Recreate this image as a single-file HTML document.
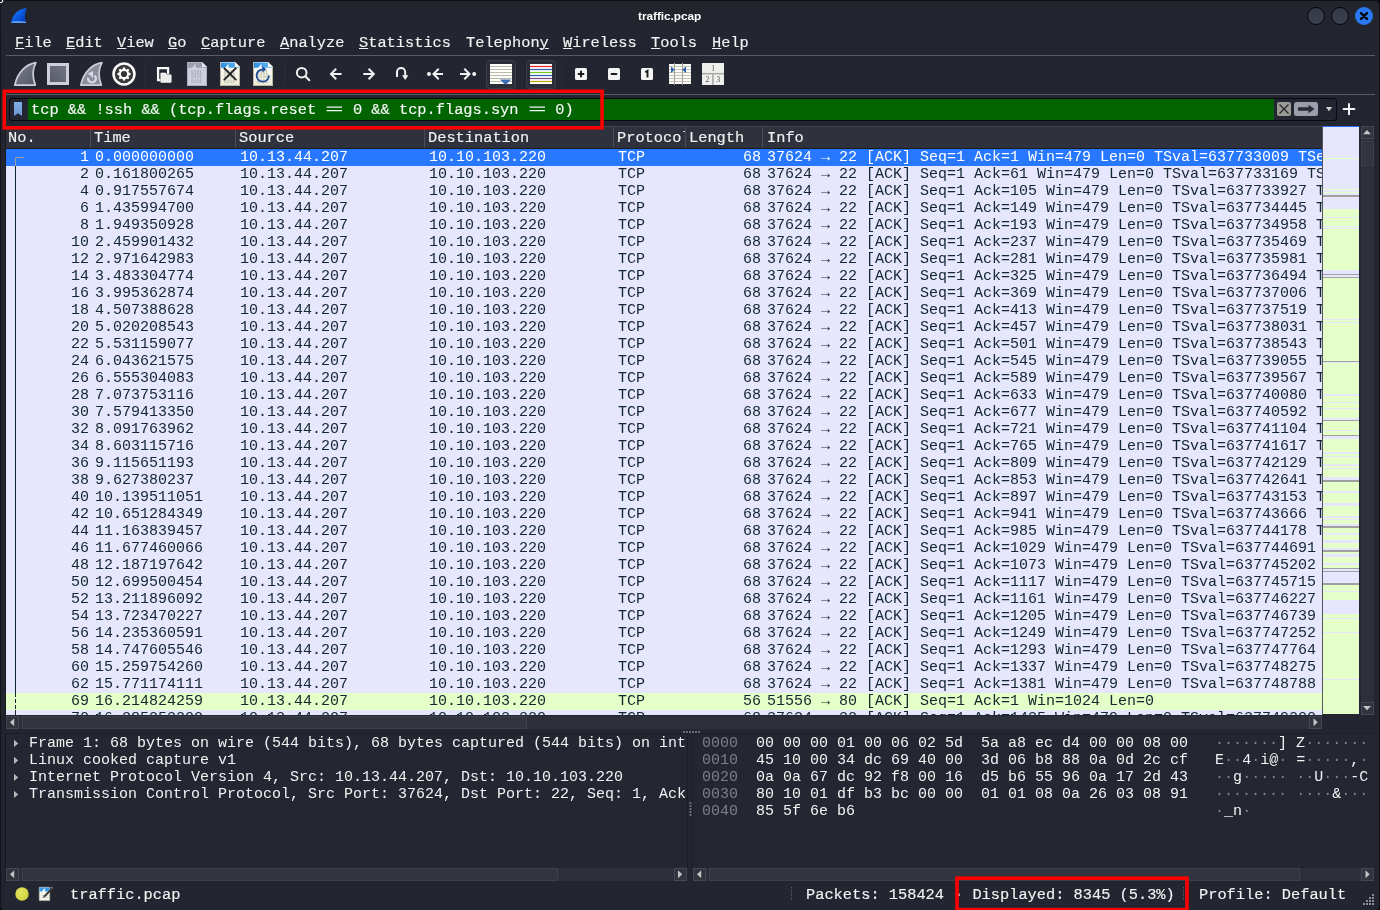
<!DOCTYPE html>
<html><head><meta charset="utf-8"><title>traffic.pcap</title>
<style>
*{box-sizing:border-box;margin:0;padding:0}
html,body{width:1380px;height:910px;overflow:hidden;background:#0e0f13}
body{position:relative;font-family:"Liberation Mono",monospace;font-size:15px;color:#f0f0f0}
.abs{position:absolute}
body>*{will-change:transform}
.ui{font-size:15.33px;-webkit-text-stroke:.15px currentColor}
#frame{left:0;top:0;width:1380px;height:911px;background:#22252d;border-left:1px solid #121419;border-top:1px solid #0e0f13;border-right:1px solid #101116;border-radius:0 5px 5px 5px}
#below{display:none}
#inner{left:5px;top:31px;width:1370px;height:879px;background:#232631}
#title{left:638px;top:7px;height:18px;line-height:18px;font-family:"Liberation Sans",sans-serif;font-weight:bold;font-size:11.800px;letter-spacing:-.03px;color:#fff;white-space:pre}
.mi{position:absolute;top:34px;height:18px;line-height:18px;color:#f2f2f2;white-space:pre}
.mi u{text-decoration:underline;text-underline-offset:1px;text-decoration-thickness:1px}
.hl{position:absolute;left:6px;width:1369px;height:1px;background:#595c65}
/* filter */
#filter{left:9px;top:98px;width:1328px;height:23px;border:1px solid #08090b;border-radius:3px;background:#232631;overflow:hidden}
#fgreen{left:18px;top:0;width:1246px;height:21px;background:#006400}
.eq{display:inline-block;vertical-align:.4px}
#ftext{left:21px;top:1px;height:21px;line-height:21px;color:#f8f8f8;white-space:pre}
/* list */
#lhead{left:6px;top:126px;width:1316px;height:22px;background:#2f323c;border-top:1px solid #41444e}
#lheadb{left:6px;top:148px;width:1316px;height:1px;background:#1a1a1c}
.hc{position:absolute;top:130px;height:17px;line-height:17px;color:#f2f2f2;white-space:pre}
.hs{position:absolute;top:126px;width:1px;height:22px;background:#4a4d57}
#list{left:6px;top:149px;width:1316px;height:566px;background:#e7e6ff;overflow:hidden}
.r{position:absolute;left:0;width:1316px;height:17px;line-height:17px;color:#12272e;white-space:pre}
.r.sel{background:#2778ff;color:#fff}
.r.grn{background:#e4ffc7}
.c{position:absolute;top:0;height:17px;overflow:hidden}
.no{left:0;width:83px;text-align:right}
.tm{left:89px;width:140px}
.sr{left:234px;width:180px}
.ds{left:423px;width:180px}
.pr{left:612px;width:70px}
.ln{left:680px;width:75px;text-align:right}
.inf{left:761px;width:555px}
/* scrollbars */
.sb{position:absolute;background:#2d303a}
.sbtn{position:absolute;background:#31343e;border:1px solid #454852}
.shandle{position:absolute;background:#323540;border:1px solid #3d404a}
/* panes */
#detail{left:6px;top:733px;width:682px;height:135px;background:#242731;border-top:1px solid #1d1f27;border-right:1px solid #1b1d25}
#bytes{left:692px;top:733px;width:682px;height:135px;background:#242731;border-top:1px solid #1d1f27;border-left:1px solid #1b1d25}
.dl{position:absolute;left:23px;height:17px;line-height:17px;white-space:pre;color:#f2f2f2;width:658px;overflow:hidden}
.bl{position:absolute;left:9px;height:17px;line-height:17px;white-space:pre;color:#f2f2f2}
.bl i{font-style:normal;color:#7d7f88}
.bl b{font-weight:normal;color:#80828b}
.st{position:absolute;top:886px;height:18px;line-height:18px;white-space:pre;color:#f2f2f2}
</style></head><body>
<div id="frame" class="abs"></div>
<div id="below" class="abs"></div>
<div id="inner" class="abs"></div>
<div id="title" class="abs">traffic.pcap</div>
<svg class="abs" style="left:0;top:0" width="1380" height="31" viewBox="0 0 1380 31">
<defs><linearGradient id="gwf" x1="0" y1="0" x2="1" y2="1"><stop offset="0" stop-color="#2a86ff"/><stop offset=".5" stop-color="#0a5ae0"/><stop offset="1" stop-color="#0230a8"/></linearGradient>
<linearGradient id="gbtn" x1="0" y1="0" x2="0" y2="1"><stop offset="0" stop-color="#363946"/><stop offset="1" stop-color="#3c3f4c"/></linearGradient></defs>
<rect x="0" y="0" width="5" height="5" fill="#22252d"/><rect x="0" y="0" width="2" height="2" fill="#14161c"/><path d="M2.500 0v1.300q0 1.200-1.200 1.200h-1.300" stroke="#f6f6f6" stroke-width="1.100" fill="none"/><circle cx="2.900" cy="2.900" r=".5" fill="#0a0b0e"/><circle cx="1.500" cy="3.800" r=".5" fill="#0a0b0e"/>
<path d="M26.8 8.100C18.3 8.800 12.500 14 11.100 23.100h15.100C24.600 18.500 24.400 13 26.800 8.300Z" fill="url(#gwf)"/>
<path d="M11.300 23h15l-.4-1.300q-7-1-14.100-.3z" fill="#5e9df5"/>
<circle cx="1316" cy="16" r="8.500" fill="url(#gbtn)" stroke="#050608" stroke-width="1"/>
<circle cx="1340" cy="16" r="8.500" fill="url(#gbtn)" stroke="#050608" stroke-width="1"/>
<circle cx="1364" cy="16" r="9" fill="#2a77f2"/>
<path d="M1361 13.100l6 5.800M1367 13.100l-6 5.800" stroke="#050505" stroke-width="2.300" stroke-linecap="round"/>
</svg>

<span class="mi ui" style="left:15px"><u>F</u>ile</span>
<span class="mi ui" style="left:66px"><u>E</u>dit</span>
<span class="mi ui" style="left:117px"><u>V</u>iew</span>
<span class="mi ui" style="left:168px"><u>G</u>o</span>
<span class="mi ui" style="left:201px"><u>C</u>apture</span>
<span class="mi ui" style="left:280px"><u>A</u>nalyze</span>
<span class="mi ui" style="left:359px"><u>S</u>tatistics</span>
<span class="mi ui" style="left:466px">Telephon<u>y</u></span>
<span class="mi ui" style="left:563px"><u>W</u>ireless</span>
<span class="mi ui" style="left:651px"><u>T</u>ools</span>
<span class="mi ui" style="left:712px"><u>H</u>elp</span>
<div class="hl" style="top:55px"></div>
<svg class="abs" style="left:0;top:56px" width="1380" height="38" viewBox="0 56 1380 38">
<defs>
<linearGradient id="gfin" x1="0" y1="0" x2="1" y2="1"><stop offset="0" stop-color="#7a7d8a"/><stop offset="1" stop-color="#555865"/></linearGradient>
<linearGradient id="gsq" x1="1" y1="0" x2="0" y2="1"><stop offset="0" stop-color="#757885"/><stop offset="1" stop-color="#555865"/></linearGradient>
<linearGradient id="gblue" x1="0" y1="0" x2="1" y2="0"><stop offset="0" stop-color="#2a8fe0"/><stop offset="1" stop-color="#63b8f2"/></linearGradient>
<linearGradient id="gdoc" x1="0" y1="0" x2="0" y2="1"><stop offset="0" stop-color="#ffffff"/><stop offset="1" stop-color="#ecebd8"/></linearGradient>
</defs>
<!-- 1 fin start (disabled) -->
<path d="M35.9 62.7C26.8 64.200 17.600 71.400 14.800 85.100H35.300C33 79 31.600 70.500 35.900 62.700Z" fill="url(#gfin)" stroke="#cdcfdb" stroke-width="1.700" stroke-linejoin="round"/>
<!-- 2 stop square -->
<rect x="48.500" y="64.500" width="19" height="19" fill="url(#gsq)" stroke="#cdcfdb" stroke-width="3"/>
<!-- 3 restart fin -->
<path d="M101.9 62.7C92.8 64.200 83.600 71.400 80.800 85.100H101.300C99 79 97.600 70.500 101.900 62.700Z" fill="#8c8e9b" stroke="#cdcfdb" stroke-width="1.700" stroke-linejoin="round"/>
<path d="M94.500 75.500A3.900 3.900 0 1 1 88.160 77.800" fill="none" stroke="#d6d8e4" stroke-width="2.200"/>
<path d="M87.500 73.600L93.100 70.900V78.200L91 76.100Z" fill="#d6d8e4"/>
<!-- 4 options gear -->
<circle cx="124" cy="74" r="11.500" fill="#3a3a3a" stroke="#77797f" stroke-width="1"/>
<circle cx="124" cy="74" r="10.400" fill="#3a3a3a" stroke="#fefefe" stroke-width="2.300"/>
<g fill="#fefefe"><circle cx="124" cy="74" r="5.200"/><circle cx="124" cy="68.500" r="1.200" transform="rotate(0 124 74)"/><circle cx="124" cy="68.500" r="1.200" transform="rotate(45 124 74)"/><circle cx="124" cy="68.500" r="1.200" transform="rotate(90 124 74)"/><circle cx="124" cy="68.500" r="1.200" transform="rotate(135 124 74)"/><circle cx="124" cy="68.500" r="1.200" transform="rotate(180 124 74)"/><circle cx="124" cy="68.500" r="1.200" transform="rotate(225 124 74)"/><circle cx="124" cy="68.500" r="1.200" transform="rotate(270 124 74)"/><circle cx="124" cy="68.500" r="1.200" transform="rotate(315 124 74)"/></g>
<circle cx="124" cy="74" r="3.100" fill="#333"/>
<rect x="144.500" y="62" width="1" height="24" fill="#2b2e38"/>
<!-- 5 open -->
<path d="M168.100 74v-5.900h-10v12h2.300" fill="none" stroke="#fbfbfb" stroke-width="2.300"/>
<path d="M160.900 73.100h4.700l1.200 1.800h4.300v7.400h-10.200z" fill="#ececea" stroke="#fdfdfd" stroke-width=".8"/>
<!-- 6 save -->
<path d="M187 62h15l5 5v19h-20z" fill="#cdcfdf"/><path d="M187.5 62.500h14.300l5 5v.200h-19.300z" fill="#9c9eac"/><path d="M202 62l5 5h-5z" fill="#e4e5ee"/><path d="M191.5 67.900c2-.3 2.500-3.400 4.600-4.200c-1 1.600-1 3 0 4.200z" fill="#d9dae6"/><path d="M187.5 62v23.500h19v-18.500" fill="none" stroke="#abadbc" stroke-width="1"/><g fill="#a6a8b8" font-family="Liberation Mono" font-weight="bold" font-size="4.600"><text x="191" y="74">0101</text><text x="191" y="78.400">0110</text><text x="191" y="82.800">0111</text></g>
<!-- 7 close -->
<path d="M220 62h15l5 5v19h-20z" fill="url(#gdoc)"/><path d="M220.5 62.500h14.300l5 5v.200h-19.300z" fill="url(#gblue)"/><path d="M235 62l5 5h-5z" fill="#f6f6ee"/><path d="M224.5 67.900c2-.3 2.500-3.400 4.600-4.200c-1 1.600-1 3 0 4.200z" fill="#ffffff"/><path d="M220.5 62v23.500h19v-18.500" fill="none" stroke="#b9b7a0" stroke-width="1"/><g fill="#b9b9a8" font-family="Liberation Mono" font-weight="bold" font-size="4.600"><text x="224" y="74">0101</text><text x="224" y="78.400">0110</text><text x="224" y="82.800">0111</text></g>
<path d="M224.300 68.300l11.500 11.300M235.800 68.300l-11.500 11.300" stroke="#242424" stroke-width="1.900" stroke-linecap="round"/>
<!-- 8 reload -->
<path d="M253 62h15l5 5v19h-20z" fill="url(#gdoc)"/><path d="M253.5 62.500h14.300l5 5v.200h-19.300z" fill="url(#gblue)"/><path d="M268 62l5 5h-5z" fill="#f6f6ee"/><path d="M257.5 67.900c2-.3 2.500-3.400 4.600-4.200c-1 1.600-1 3 0 4.200z" fill="#ffffff"/><path d="M253.5 62v23.500h19v-18.500" fill="none" stroke="#b9b7a0" stroke-width="1"/><g fill="#b9b9a8" font-family="Liberation Mono" font-weight="bold" font-size="4.600"><text x="257" y="74">0101</text><text x="257" y="78.400">0110</text><text x="257" y="82.800">0111</text></g>
<path d="M269 75.500a6.200 6.200 0 1 1-6.200-6.200" fill="none" stroke="#1d4b96" stroke-width="1.800"/><path d="M262.300 66.200l4 3.100-4 3.100z" fill="#1d4b96"/>
<rect x="284" y="62" width="1" height="24" fill="#2d303a"/>
<!-- 9 find -->
<g fill="none" stroke="#f2f2f2" stroke-width="2" stroke-linecap="round">
<circle cx="301.700" cy="72.700" r="4.800"/><path d="M305.300 76.300l4 4"/>
<!-- 10 back -->
<path d="M341.500 74h-10.500M336.200 68.800l-5.200 5.200 5.200 5.200" stroke-linejoin="miter" stroke-linecap="butt"/>
<!-- 11 fwd -->
<path d="M363.300 74h10.500M368.600 68.800l5.200 5.200-5.200 5.200" stroke-linecap="butt"/>
<!-- 12 goto -->
<path d="M397 77v-5a4.100 4.100 0 0 1 8.200 0v4" stroke-linecap="butt"/>
<!-- 13 first -->
<path d="M443 74h-9.500M438.700 68.800l-5.200 5.200 5.200 5.200" stroke-linecap="butt"/>
<!-- 14 last -->
<path d="M460 74h9.500M464.300 68.800l5.200 5.200-5.200 5.200" stroke-linecap="butt"/>
</g>
<path d="M402 75.300h6.400l-3.200 4.600z" fill="#f2f2f2"/>
<circle cx="429" cy="74" r="2" fill="#f2f2f2"/><circle cx="474.200" cy="74" r="2" fill="#f2f2f2"/>
<!-- 15 autoscroll (checked) -->
<rect x="486.500" y="60.500" width="29" height="28" rx="3" fill="#2a2d37" stroke="#3b3e48"/>
<rect x="490" y="64" width="22" height="20" fill="#fdfdfb"/>
<path d="M490 66.500h22M490 69.500h22M490 72.500h22M490 75.500h22M490 78.500h22M490 81.500h22" stroke="#b9baa8" stroke-width="1"/>
<path d="M500.200 79.400h10.800q-.5 1-5.400 5.400q-4.900-4.400-5.400-5.400z" fill="#3b6cb4"/>
<rect x="521.500" y="62" width="1" height="24" fill="#2b2e38"/>
<!-- 16 colorize (checked) -->
<rect x="526.500" y="60.500" width="29" height="28" rx="3" fill="#2a2d37" stroke="#3b3e48"/>
<rect x="530" y="64" width="22" height="20" fill="#fdfdfd"/>
<path d="M530 66.500h22" stroke="#ee2222" stroke-width="1.200"/><path d="M530 69.500h22" stroke="#2e60ae" stroke-width="1.200"/><path d="M530 72.500h22" stroke="#6ecb1e" stroke-width="1.200"/><path d="M530 75.500h22" stroke="#2e60ae" stroke-width="1.200"/><path d="M530 78.500h22" stroke="#7d4b8d" stroke-width="1.200"/><path d="M530 81.500h22" stroke="#c9a204" stroke-width="1.200"/>
<rect x="561.500" y="62" width="1" height="24" fill="#2b2e38"/>
<!-- 17-19 zoom -->
<rect x="575" y="68" width="12" height="12" rx="1.500" fill="#f4f4f4"/><path d="M577.800 74h6.400M581 70.800v6.400" stroke="#1c1c1c" stroke-width="2"/>
<rect x="608" y="68" width="12" height="12" rx="1.500" fill="#f4f4f4"/><path d="M610.800 74h6.400" stroke="#1c1c1c" stroke-width="2"/>
<rect x="641" y="68" width="12" height="12" rx="1.500" fill="#f4f4f4"/><path d="M645.300 72.300l2.200-1.500v6.700" stroke="#1c1c1c" stroke-width="1.900" fill="none"/>
<!-- 20 resize columns -->
<rect x="669" y="64" width="22" height="20" fill="#fbfbf9"/>
<path d="M669 66.500h22M669 69.500h22M669 72.500h22M669 75.500h22M669 78.500h22M669 81.500h22" stroke="#c4c5b6" stroke-width="1"/>
<path d="M674.500 63v22M682.500 63v22" stroke="#a2a395" stroke-width="1"/>
<path d="M671 66.600l3.800 3.200-3.800 3.200z" fill="#2f65b4"/><path d="M686 66.600l-3.800 3.200 3.800 3.200z" fill="#2f65b4"/>
<!-- 21 layout -->
<rect x="702" y="63" width="22" height="22" fill="#efefed"/>
<path d="M702 73.700h22" stroke="#a9a9a7" stroke-width="1.600"/><path d="M712.900 74v11" stroke="#a9a9a7" stroke-width="1.600"/>
<g fill="#555" font-family="Liberation Serif" font-size="7.500"><text x="711.300" y="71">1</text><text x="705.600" y="82.300">2</text><text x="716.600" y="82.300">3</text></g>
</svg>

<div class="hl" style="top:94px"></div>
<div id="filter" class="abs"><div id="fgreen" class="abs"></div><div id="ftext" class="abs ui">tcp &amp;&amp; !ssh &amp;&amp; (tcp.flags.reset <svg class="eq" width="18.400" height="10" viewBox="0 0 18.4 10"><path d="M1.600 3.100h15.400M1.600 6.600h15.400" stroke="#f4f4f4" stroke-width="1.300"/></svg> 0 &amp;&amp; tcp.flags.syn <svg class="eq" width="18.400" height="10" viewBox="0 0 18.4 10"><path d="M1.600 3.100h15.400M1.600 6.600h15.400" stroke="#f4f4f4" stroke-width="1.300"/></svg> 0)</div></div>
<svg class="abs" style="left:0;top:96px" width="1380" height="28" viewBox="0 96 1380 28">
<defs><linearGradient id="gbm" x1="0" y1="0" x2="0" y2="1"><stop offset="0" stop-color="#82b0e4"/><stop offset="1" stop-color="#6a98d2"/></linearGradient></defs>
<path d="M14 102h8v14l-4-2.800-4 2.800z" fill="url(#gbm)"/>
<rect x="1277" y="102" width="14" height="14" rx="2" fill="#9a9a95"/>
<path d="M1279.500 104.500l9 9M1288.500 104.500l-9 9" stroke="#26282f" stroke-width="1.300"/>
<rect x="1294" y="102" width="24" height="14" rx="2.500" fill="#9b9eab"/>
<path d="M1298 107.300h10.500v-2.600l6 4.300-6 4.300v-2.600h-10.500z" fill="#2a2d36"/>
<path d="M1325.800 107h6.400l-3.200 4.200z" fill="#cfcfcf"/>
<path d="M1342.800 109h12.400M1349 103.200v11.800" stroke="#f2f2f2" stroke-width="2"/>
</svg>

<div class="abs" style="left:5px;top:126px;width:1px;height:604px;background:#181a20"></div><div class="abs" style="left:5px;top:733px;width:1px;height:149px;background:#181a20"></div>
<div id="lhead" class="abs"></div><div id="lheadb" class="abs"></div>
<span class="hc ui" style="left:8px">No.</span><span class="hc ui" style="left:94px">Time</span><span class="hc ui" style="left:239px">Source</span><span class="hc ui" style="left:428px">Destination</span><span class="hc ui" style="left:617px;width:68px;overflow:hidden">Protocol</span><span class="hc ui" style="left:689px">Length</span><span class="hc ui" style="left:767px">Info</span>
<div class="hs" style="left:90px"></div><div class="hs" style="left:235px"></div><div class="hs" style="left:424px"></div><div class="hs" style="left:613px"></div><div class="hs" style="left:685px"></div><div class="hs" style="left:762px"></div>
<div id="list" class="abs">
<div class="r sel" style="top:0px"><span class="c no">1</span><span class="c tm">0.000000000</span><span class="c sr">10.13.44.207</span><span class="c ds">10.10.103.220</span><span class="c pr">TCP</span><span class="c ln">68</span><span class="c inf">37624 → 22 [ACK] Seq=1 Ack=1 Win=479 Len=0 TSval=637733009 TSe</span></div>
<div class="r" style="top:17px"><span class="c no">2</span><span class="c tm">0.161800265</span><span class="c sr">10.13.44.207</span><span class="c ds">10.10.103.220</span><span class="c pr">TCP</span><span class="c ln">68</span><span class="c inf">37624 → 22 [ACK] Seq=1 Ack=61 Win=479 Len=0 TSval=637733169 TS</span></div>
<div class="r" style="top:34px"><span class="c no">4</span><span class="c tm">0.917557674</span><span class="c sr">10.13.44.207</span><span class="c ds">10.10.103.220</span><span class="c pr">TCP</span><span class="c ln">68</span><span class="c inf">37624 → 22 [ACK] Seq=1 Ack=105 Win=479 Len=0 TSval=637733927 T</span></div>
<div class="r" style="top:51px"><span class="c no">6</span><span class="c tm">1.435994700</span><span class="c sr">10.13.44.207</span><span class="c ds">10.10.103.220</span><span class="c pr">TCP</span><span class="c ln">68</span><span class="c inf">37624 → 22 [ACK] Seq=1 Ack=149 Win=479 Len=0 TSval=637734445 T</span></div>
<div class="r" style="top:68px"><span class="c no">8</span><span class="c tm">1.949350928</span><span class="c sr">10.13.44.207</span><span class="c ds">10.10.103.220</span><span class="c pr">TCP</span><span class="c ln">68</span><span class="c inf">37624 → 22 [ACK] Seq=1 Ack=193 Win=479 Len=0 TSval=637734958 T</span></div>
<div class="r" style="top:85px"><span class="c no">10</span><span class="c tm">2.459901432</span><span class="c sr">10.13.44.207</span><span class="c ds">10.10.103.220</span><span class="c pr">TCP</span><span class="c ln">68</span><span class="c inf">37624 → 22 [ACK] Seq=1 Ack=237 Win=479 Len=0 TSval=637735469 T</span></div>
<div class="r" style="top:102px"><span class="c no">12</span><span class="c tm">2.971642983</span><span class="c sr">10.13.44.207</span><span class="c ds">10.10.103.220</span><span class="c pr">TCP</span><span class="c ln">68</span><span class="c inf">37624 → 22 [ACK] Seq=1 Ack=281 Win=479 Len=0 TSval=637735981 T</span></div>
<div class="r" style="top:119px"><span class="c no">14</span><span class="c tm">3.483304774</span><span class="c sr">10.13.44.207</span><span class="c ds">10.10.103.220</span><span class="c pr">TCP</span><span class="c ln">68</span><span class="c inf">37624 → 22 [ACK] Seq=1 Ack=325 Win=479 Len=0 TSval=637736494 T</span></div>
<div class="r" style="top:136px"><span class="c no">16</span><span class="c tm">3.995362874</span><span class="c sr">10.13.44.207</span><span class="c ds">10.10.103.220</span><span class="c pr">TCP</span><span class="c ln">68</span><span class="c inf">37624 → 22 [ACK] Seq=1 Ack=369 Win=479 Len=0 TSval=637737006 T</span></div>
<div class="r" style="top:153px"><span class="c no">18</span><span class="c tm">4.507388628</span><span class="c sr">10.13.44.207</span><span class="c ds">10.10.103.220</span><span class="c pr">TCP</span><span class="c ln">68</span><span class="c inf">37624 → 22 [ACK] Seq=1 Ack=413 Win=479 Len=0 TSval=637737519 T</span></div>
<div class="r" style="top:170px"><span class="c no">20</span><span class="c tm">5.020208543</span><span class="c sr">10.13.44.207</span><span class="c ds">10.10.103.220</span><span class="c pr">TCP</span><span class="c ln">68</span><span class="c inf">37624 → 22 [ACK] Seq=1 Ack=457 Win=479 Len=0 TSval=637738031 T</span></div>
<div class="r" style="top:187px"><span class="c no">22</span><span class="c tm">5.531159077</span><span class="c sr">10.13.44.207</span><span class="c ds">10.10.103.220</span><span class="c pr">TCP</span><span class="c ln">68</span><span class="c inf">37624 → 22 [ACK] Seq=1 Ack=501 Win=479 Len=0 TSval=637738543 T</span></div>
<div class="r" style="top:204px"><span class="c no">24</span><span class="c tm">6.043621575</span><span class="c sr">10.13.44.207</span><span class="c ds">10.10.103.220</span><span class="c pr">TCP</span><span class="c ln">68</span><span class="c inf">37624 → 22 [ACK] Seq=1 Ack=545 Win=479 Len=0 TSval=637739055 T</span></div>
<div class="r" style="top:221px"><span class="c no">26</span><span class="c tm">6.555304083</span><span class="c sr">10.13.44.207</span><span class="c ds">10.10.103.220</span><span class="c pr">TCP</span><span class="c ln">68</span><span class="c inf">37624 → 22 [ACK] Seq=1 Ack=589 Win=479 Len=0 TSval=637739567 T</span></div>
<div class="r" style="top:238px"><span class="c no">28</span><span class="c tm">7.073753116</span><span class="c sr">10.13.44.207</span><span class="c ds">10.10.103.220</span><span class="c pr">TCP</span><span class="c ln">68</span><span class="c inf">37624 → 22 [ACK] Seq=1 Ack=633 Win=479 Len=0 TSval=637740080 T</span></div>
<div class="r" style="top:255px"><span class="c no">30</span><span class="c tm">7.579413350</span><span class="c sr">10.13.44.207</span><span class="c ds">10.10.103.220</span><span class="c pr">TCP</span><span class="c ln">68</span><span class="c inf">37624 → 22 [ACK] Seq=1 Ack=677 Win=479 Len=0 TSval=637740592 T</span></div>
<div class="r" style="top:272px"><span class="c no">32</span><span class="c tm">8.091763962</span><span class="c sr">10.13.44.207</span><span class="c ds">10.10.103.220</span><span class="c pr">TCP</span><span class="c ln">68</span><span class="c inf">37624 → 22 [ACK] Seq=1 Ack=721 Win=479 Len=0 TSval=637741104 T</span></div>
<div class="r" style="top:289px"><span class="c no">34</span><span class="c tm">8.603115716</span><span class="c sr">10.13.44.207</span><span class="c ds">10.10.103.220</span><span class="c pr">TCP</span><span class="c ln">68</span><span class="c inf">37624 → 22 [ACK] Seq=1 Ack=765 Win=479 Len=0 TSval=637741617 T</span></div>
<div class="r" style="top:306px"><span class="c no">36</span><span class="c tm">9.115651193</span><span class="c sr">10.13.44.207</span><span class="c ds">10.10.103.220</span><span class="c pr">TCP</span><span class="c ln">68</span><span class="c inf">37624 → 22 [ACK] Seq=1 Ack=809 Win=479 Len=0 TSval=637742129 T</span></div>
<div class="r" style="top:323px"><span class="c no">38</span><span class="c tm">9.627380237</span><span class="c sr">10.13.44.207</span><span class="c ds">10.10.103.220</span><span class="c pr">TCP</span><span class="c ln">68</span><span class="c inf">37624 → 22 [ACK] Seq=1 Ack=853 Win=479 Len=0 TSval=637742641 T</span></div>
<div class="r" style="top:340px"><span class="c no">40</span><span class="c tm">10.139511051</span><span class="c sr">10.13.44.207</span><span class="c ds">10.10.103.220</span><span class="c pr">TCP</span><span class="c ln">68</span><span class="c inf">37624 → 22 [ACK] Seq=1 Ack=897 Win=479 Len=0 TSval=637743153 T</span></div>
<div class="r" style="top:357px"><span class="c no">42</span><span class="c tm">10.651284349</span><span class="c sr">10.13.44.207</span><span class="c ds">10.10.103.220</span><span class="c pr">TCP</span><span class="c ln">68</span><span class="c inf">37624 → 22 [ACK] Seq=1 Ack=941 Win=479 Len=0 TSval=637743666 T</span></div>
<div class="r" style="top:374px"><span class="c no">44</span><span class="c tm">11.163839457</span><span class="c sr">10.13.44.207</span><span class="c ds">10.10.103.220</span><span class="c pr">TCP</span><span class="c ln">68</span><span class="c inf">37624 → 22 [ACK] Seq=1 Ack=985 Win=479 Len=0 TSval=637744178 T</span></div>
<div class="r" style="top:391px"><span class="c no">46</span><span class="c tm">11.677460066</span><span class="c sr">10.13.44.207</span><span class="c ds">10.10.103.220</span><span class="c pr">TCP</span><span class="c ln">68</span><span class="c inf">37624 → 22 [ACK] Seq=1 Ack=1029 Win=479 Len=0 TSval=637744691 </span></div>
<div class="r" style="top:408px"><span class="c no">48</span><span class="c tm">12.187197642</span><span class="c sr">10.13.44.207</span><span class="c ds">10.10.103.220</span><span class="c pr">TCP</span><span class="c ln">68</span><span class="c inf">37624 → 22 [ACK] Seq=1 Ack=1073 Win=479 Len=0 TSval=637745202 </span></div>
<div class="r" style="top:425px"><span class="c no">50</span><span class="c tm">12.699500454</span><span class="c sr">10.13.44.207</span><span class="c ds">10.10.103.220</span><span class="c pr">TCP</span><span class="c ln">68</span><span class="c inf">37624 → 22 [ACK] Seq=1 Ack=1117 Win=479 Len=0 TSval=637745715 </span></div>
<div class="r" style="top:442px"><span class="c no">52</span><span class="c tm">13.211896092</span><span class="c sr">10.13.44.207</span><span class="c ds">10.10.103.220</span><span class="c pr">TCP</span><span class="c ln">68</span><span class="c inf">37624 → 22 [ACK] Seq=1 Ack=1161 Win=479 Len=0 TSval=637746227 </span></div>
<div class="r" style="top:459px"><span class="c no">54</span><span class="c tm">13.723470227</span><span class="c sr">10.13.44.207</span><span class="c ds">10.10.103.220</span><span class="c pr">TCP</span><span class="c ln">68</span><span class="c inf">37624 → 22 [ACK] Seq=1 Ack=1205 Win=479 Len=0 TSval=637746739 </span></div>
<div class="r" style="top:476px"><span class="c no">56</span><span class="c tm">14.235360591</span><span class="c sr">10.13.44.207</span><span class="c ds">10.10.103.220</span><span class="c pr">TCP</span><span class="c ln">68</span><span class="c inf">37624 → 22 [ACK] Seq=1 Ack=1249 Win=479 Len=0 TSval=637747252 </span></div>
<div class="r" style="top:493px"><span class="c no">58</span><span class="c tm">14.747605546</span><span class="c sr">10.13.44.207</span><span class="c ds">10.10.103.220</span><span class="c pr">TCP</span><span class="c ln">68</span><span class="c inf">37624 → 22 [ACK] Seq=1 Ack=1293 Win=479 Len=0 TSval=637747764 </span></div>
<div class="r" style="top:510px"><span class="c no">60</span><span class="c tm">15.259754260</span><span class="c sr">10.13.44.207</span><span class="c ds">10.10.103.220</span><span class="c pr">TCP</span><span class="c ln">68</span><span class="c inf">37624 → 22 [ACK] Seq=1 Ack=1337 Win=479 Len=0 TSval=637748275 </span></div>
<div class="r" style="top:527px"><span class="c no">62</span><span class="c tm">15.771174111</span><span class="c sr">10.13.44.207</span><span class="c ds">10.10.103.220</span><span class="c pr">TCP</span><span class="c ln">68</span><span class="c inf">37624 → 22 [ACK] Seq=1 Ack=1381 Win=479 Len=0 TSval=637748788 </span></div>
<div class="r grn" style="top:544px"><span class="c no">69</span><span class="c tm">16.214824259</span><span class="c sr">10.13.44.207</span><span class="c ds">10.10.103.220</span><span class="c pr">TCP</span><span class="c ln">56</span><span class="c inf">51556 → 80 [ACK] Seq=1 Ack=1 Win=1024 Len=0</span></div>
<div class="r" style="top:561px"><span class="c no">70</span><span class="c tm">16.285252300</span><span class="c sr">10.13.44.207</span><span class="c ds">10.10.103.220</span><span class="c pr">TCP</span><span class="c ln">68</span><span class="c inf">37624 → 22 [ACK] Seq=1 Ack=1425 Win=479 Len=0 TSval=637749300</span></div>
<svg class="abs" style="left:0;top:0" width="40" height="566"><path d="M18.5 8.5H9.5V17" stroke="#a0a0a0" fill="none"/><path d="M9.500 17V548M9.500 550V554M9.500 556V560M9.500 561V566" stroke="#12272e" fill="none"/></svg>
</div>
<div class="abs" style="left:1322px;top:126px;width:1px;height:589px;background:#55565c"></div>
<div class="abs" style="left:1323px;top:126px;width:36px;height:588px;background:#e7e6ff;overflow:hidden">
<div class="abs" style="left:0;top:0px;width:36px;height:1px;background:#2a6cf0"></div>
<div class="abs" style="left:0;top:32px;width:36px;height:1px;background:#e4ffc7"></div>
<div class="abs" style="left:0;top:63px;width:36px;height:1px;background:#e4ffc7"></div>
<div class="abs" style="left:0;top:66px;width:36px;height:1px;background:#e4ffc7"></div>
<div class="abs" style="left:0;top:69px;width:36px;height:2px;background:#a0a0a0"></div>
<div class="abs" style="left:0;top:83px;width:36px;height:8px;background:#e4ffc7"></div>
<div class="abs" style="left:0;top:92px;width:36px;height:8px;background:#e4ffc7"></div>
<div class="abs" style="left:0;top:101px;width:36px;height:1px;background:#e4ffc7"></div>
<div class="abs" style="left:0;top:103px;width:36px;height:41px;background:#e4ffc7"></div>
<div class="abs" style="left:0;top:148px;width:36px;height:1px;background:#a0a0a0"></div>
<div class="abs" style="left:0;top:151px;width:36px;height:1px;background:#a0a0a0"></div>
<div class="abs" style="left:0;top:152px;width:36px;height:41px;background:#e4ffc7"></div>
<div class="abs" style="left:0;top:194px;width:36px;height:2px;background:#e4ffc7"></div>
<div class="abs" style="left:0;top:197px;width:36px;height:38px;background:#e4ffc7"></div>
<div class="abs" style="left:0;top:235px;width:36px;height:1px;background:#a0a0a0"></div>
<div class="abs" style="left:0;top:237px;width:36px;height:31px;background:#e4ffc7"></div>
<div class="abs" style="left:0;top:270px;width:36px;height:6px;background:#e4ffc7"></div>
<div class="abs" style="left:0;top:277px;width:36px;height:5px;background:#e4ffc7"></div>
<div class="abs" style="left:0;top:283px;width:36px;height:9px;background:#e4ffc7"></div>
<div class="abs" style="left:0;top:294px;width:36px;height:1px;background:#a0a0a0"></div>
<div class="abs" style="left:0;top:295px;width:36px;height:9px;background:#e4ffc7"></div>
<div class="abs" style="left:0;top:305px;width:36px;height:4px;background:#e4ffc7"></div>
<div class="abs" style="left:0;top:309px;width:36px;height:1px;background:#a0a0a0"></div>
<div class="abs" style="left:0;top:313px;width:36px;height:13px;background:#e4ffc7"></div>
<div class="abs" style="left:0;top:328px;width:36px;height:2px;background:#e4ffc7"></div>
<div class="abs" style="left:0;top:331px;width:36px;height:7px;background:#e4ffc7"></div>
<div class="abs" style="left:0;top:340px;width:36px;height:2px;background:#e4ffc7"></div>
<div class="abs" style="left:0;top:343px;width:36px;height:8px;background:#e4ffc7"></div>
<div class="abs" style="left:0;top:354px;width:36px;height:2px;background:#a0a0a0"></div>
<div class="abs" style="left:0;top:356px;width:36px;height:9px;background:#e4ffc7"></div>
<div class="abs" style="left:0;top:367px;width:36px;height:10px;background:#e4ffc7"></div>
<div class="abs" style="left:0;top:380px;width:36px;height:10px;background:#e4ffc7"></div>
<div class="abs" style="left:0;top:392px;width:36px;height:1px;background:#e4ffc7"></div>
<div class="abs" style="left:0;top:394px;width:36px;height:4px;background:#e4ffc7"></div>
<div class="abs" style="left:0;top:400px;width:36px;height:2px;background:#a0a0a0"></div>
<div class="abs" style="left:0;top:402px;width:36px;height:5px;background:#e4ffc7"></div>
<div class="abs" style="left:0;top:409px;width:36px;height:5px;background:#e4ffc7"></div>
<div class="abs" style="left:0;top:417px;width:36px;height:5px;background:#e4ffc7"></div>
<div class="abs" style="left:0;top:424px;width:36px;height:2px;background:#a0a0a0"></div>
<div class="abs" style="left:0;top:426px;width:36px;height:2px;background:#e4ffc7"></div>
<div class="abs" style="left:0;top:431px;width:36px;height:6px;background:#e4ffc7"></div>
<div class="abs" style="left:0;top:439px;width:36px;height:3px;background:#e4ffc7"></div>
<div class="abs" style="left:0;top:442px;width:36px;height:1px;background:#a0a0a0"></div>
<div class="abs" style="left:0;top:445px;width:36px;height:1px;background:#a0a0a0"></div>
<div class="abs" style="left:0;top:457px;width:36px;height:2px;background:#a0a0a0"></div>
<div class="abs" style="left:0;top:459px;width:36px;height:6px;background:#e4ffc7"></div>
<div class="abs" style="left:0;top:466px;width:36px;height:8px;background:#e4ffc7"></div>
<div class="abs" style="left:0;top:488px;width:36px;height:4px;background:#e4ffc7"></div>
<div class="abs" style="left:0;top:493px;width:36px;height:13px;background:#e4ffc7"></div>
<div class="abs" style="left:0;top:507px;width:36px;height:46px;background:#e4ffc7"></div>
<div class="abs" style="left:0;top:554px;width:36px;height:35px;background:#e4ffc7"></div>
</div>
<!-- list hscroll -->
<div class="sb" style="left:6px;top:716px;width:1316px;height:13px"></div>
<div class="sbtn" style="left:6px;top:716px;width:13px;height:13px"></div>
<div class="shandle" style="left:22px;top:716px;width:505px;height:13px"></div>
<div class="sbtn" style="left:1309px;top:716px;width:13px;height:13px"></div>
<!-- list vscroll -->
<div class="sb" style="left:1361px;top:126px;width:13px;height:589px"></div>
<div class="sbtn" style="left:1361px;top:126px;width:13px;height:13px"></div>
<div class="shandle" style="left:1361px;top:141px;width:13px;height:25px"></div>
<div class="sbtn" style="left:1361px;top:702px;width:13px;height:13px"></div>
<!-- panes -->
<div id="detail" class="abs">
<div class="dl" style="top:1px">Frame 1: 68 bytes on wire (544 bits), 68 bytes captured (544 bits) on inte</div>
<div class="dl" style="top:18px">Linux cooked capture v1</div>
<div class="dl" style="top:35px">Internet Protocol Version 4, Src: 10.13.44.207, Dst: 10.10.103.220</div>
<div class="dl" style="top:52px">Transmission Control Protocol, Src Port: 37624, Dst Port: 22, Seq: 1, Ack:</div>
<svg class="abs" style="left:0;top:0" width="30" height="80"><path d="M8 5.700l4.200 3.700-4.200 3.700zM8 22.700l4.200 3.700-4.200 3.700zM8 39.700l4.200 3.700-4.200 3.700zM8 56.700l4.200 3.700-4.200 3.700z" fill="#b8b8b8"/></svg>
</div>
<div id="bytes" class="abs">
<div class="bl" style="top:1px"><i>0000</i>  00 00 00 01 00 06 02 5d  5a a8 ec d4 00 00 08 00   <b>·······</b>] Z<b>·······</b></div>
<div class="bl" style="top:18px"><i>0010</i>  45 10 00 34 dc 69 40 00  3d 06 b8 88 0a 0d 2c cf   E<b>··</b>4<b>·</b>i@<b>·</b> =<b>·····</b>,<b>·</b></div>
<div class="bl" style="top:35px"><i>0020</i>  0a 0a 67 dc 92 f8 00 16  d5 b6 55 96 0a 17 2d 43   <b>··</b>g<b>·····</b> <b>··</b>U<b>···</b>-C</div>
<div class="bl" style="top:52px"><i>0030</i>  80 10 01 df b3 bc 00 00  01 01 08 0a 26 03 08 91   <b>········</b> <b>····</b>&amp;<b>···</b></div>
<div class="bl" style="top:69px"><i>0040</i>  85 5f 6e b6                                        <b>·</b>_n<b>·</b></div>
</div>
<!-- pane hscrolls -->
<div class="sb" style="left:6px;top:868px;width:681px;height:13px"></div>
<div class="sbtn" style="left:6px;top:868px;width:13px;height:13px"></div>
<div class="shandle" style="left:22px;top:868px;width:536px;height:13px"></div>
<div class="sbtn" style="left:674px;top:868px;width:13px;height:13px"></div>
<div class="sb" style="left:693px;top:868px;width:681px;height:13px"></div>
<div class="sbtn" style="left:693px;top:868px;width:13px;height:13px"></div>
<div class="shandle" style="left:709px;top:868px;width:591px;height:13px"></div>
<div class="sbtn" style="left:1361px;top:868px;width:13px;height:13px"></div>
<svg class="abs" style="left:0;top:0;pointer-events:none" width="1380" height="910">
<g fill="#c4c4c4">
<path d="M1363 134.300h8l-4-4.300z"/><path d="M1363 706h8l-4 4.300z"/>
<path d="M14.200 718.300v8l-4.200-4z"/><path d="M1313.500 718.300v8l4.200-4z"/>
<path d="M14.200 870.300v8l-4.200-4z"/><path d="M678 870.300v8l4.200-4z"/>
<path d="M701.200 870.300v8l-4.200-4z"/><path d="M1365.500 870.300v8l4.200-4z"/>
</g>
<g fill="#6a6d76"><rect x="683" y="731" width="2" height="2"/><rect x="686" y="731" width="2" height="2"/><rect x="689" y="731" width="2" height="2"/><rect x="692" y="731" width="2" height="2"/><rect x="695" y="731" width="2" height="2"/><rect x="698" y="731" width="2" height="2"/>
<rect x="689.500" y="802" width="2" height="2"/><rect x="689.500" y="805" width="2" height="2"/><rect x="689.500" y="808" width="2" height="2"/><rect x="689.500" y="811" width="2" height="2"/><rect x="689.500" y="814" width="2" height="2"/></g>
</svg>
<!-- status -->
<span class="st ui" style="left:70px">traffic.pcap</span>
<span class="st ui" style="left:805.500px">Packets: 158424</span><span class="st ui" style="left:954.200px">· Displayed: 8345 (5.3%)</span>
<span class="st ui" style="left:1199px">Profile: Default</span>
<svg class="abs" style="left:0;top:884px" width="1380" height="24" viewBox="0 884 1380 24">
<defs><radialGradient id="gy" cx=".4" cy=".35" r=".7"><stop offset="0" stop-color="#e6e65e"/><stop offset="1" stop-color="#cfcf44"/></radialGradient></defs>
<circle cx="22" cy="894" r="6.700" fill="url(#gy)"/>
<path d="M39.300 887.300h10.400v13.300h-10.400z" fill="#f4f4ea" stroke="#c8c8b8" stroke-width=".6"/>
<path d="M39.500 887.500h10v4h-10z" fill="#3a9be6"/>
<path d="M42 892c.5-2 2-3.500 3.500-3.800c-1 1.500-.8 2.800 0 3.800z" fill="#fff"/>
<path d="M41.500 895.500h6M41.500 897.500h6" stroke="#c0c0b0" stroke-width=".7"/>
<path d="M51.200 888l-7.200 7.400-1.300 2.600 2.700-1.200 7.200-7.400z" fill="#3a3a3a"/>
<path d="M50.300 887.200l1.500-.8 1.300 1.300-.9 1.400z" fill="#777"/>
<g fill="#8a8c95">
<rect x="1372" y="894" width="2" height="2"/>
<rect x="1369" y="897" width="2" height="2"/><rect x="1372" y="897" width="2" height="2"/>
<rect x="1366" y="900" width="2" height="2"/><rect x="1369" y="900" width="2" height="2"/><rect x="1372" y="900" width="2" height="2"/>
<rect x="1363" y="903" width="2" height="2"/><rect x="1366" y="903" width="2" height="2"/><rect x="1369" y="903" width="2" height="2"/><rect x="1372" y="903" width="2" height="2"/>
</g>
<!-- status splitter handles -->
<path d="M791.500 887v14M1183.500 887v14" stroke="#5d6069" stroke-width="1" stroke-dasharray="1 1"/>
</svg>

<svg class="abs" style="left:0;top:0;pointer-events:none" width="1380" height="910">
<rect x="4.250" y="91.250" width="597.800" height="36.600" fill="none" stroke="#ff0000" stroke-width="3.500"/>
<rect x="957" y="878.200" width="230" height="31.400" fill="none" stroke="#ff0000" stroke-width="3.600"/>
</svg>
</body></html>
